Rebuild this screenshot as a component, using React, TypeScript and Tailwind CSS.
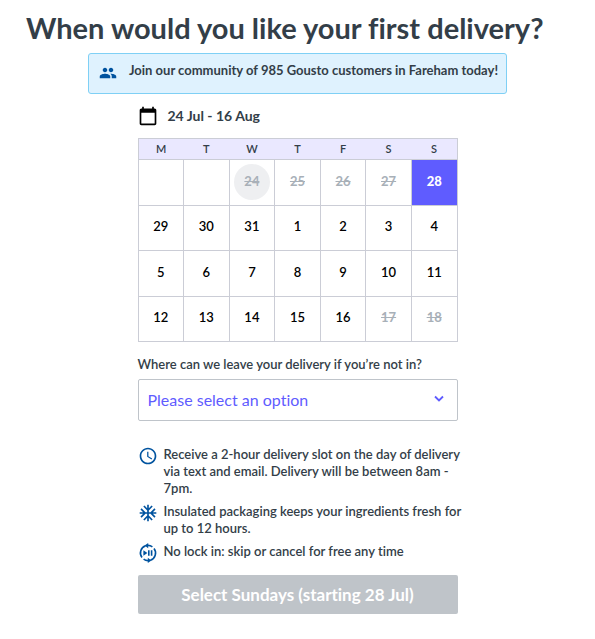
import { useState } from 'react';
import { MdAccessTime, MdAcUnit, MdCalendarToday, MdPeople } from 'react-icons/md';

type Day = { label: string; disabled?: boolean; today?: boolean };

const weekDays = ['M', 'T', 'W', 'T', 'F', 'S', 'S'];

const open = (...days: number[]): Day[] => days.map((d) => ({ label: String(d) }));

const weeks: Day[][] = [
  [
    { label: '' },
    { label: '' },
    { label: '24', disabled: true, today: true },
    { label: '25', disabled: true },
    { label: '26', disabled: true },
    { label: '27', disabled: true },
    { label: '28' },
  ],
  open(29, 30, 31, 1, 2, 3, 4),
  open(5, 6, 7, 8, 9, 10, 11),
  [...open(12, 13, 14, 15, 16), { label: '17', disabled: true }, { label: '18', disabled: true }],
];

// Play/pause glyph inside two circling arrows
function PauseCycleIcon() {
  return (
    <svg width="20" height="20" viewBox="0 0 20 20" fill="none" stroke="currentColor" strokeWidth="1.6" aria-hidden="true">
      <path d="M4 14.6A7.6 7.6 0 0 1 7.6 2.8M12.4 17.2A7.6 7.6 0 0 0 16 5.4M10 2.4a7.6 7.6 0 0 1 4.4 1.4M10 17.6a7.6 7.6 0 0 1-4.4-1.4" />
      <path d="M10.2 0v5.2L6.6 2.6zM9.8 14.8V20l3.6-2.6z" fill="currentColor" stroke="none" />
      <path d="M5.4 7.2 9.4 10l-4 2.8z" fill="currentColor" stroke="none" />
      <path d="M10.8 7.2v5.6M13.6 7.2v5.6" />
    </svg>
  );
}

function DayCell({ day, selected, onSelect }: { day: Day; selected: boolean; onSelect: () => void }) {
  if (!day.label) return <td className="border border-[#cbcdd6]" />;

  let style = 'font-semibold text-black';
  if (day.disabled) style = 'font-bold text-[#a8b0b8] line-through';
  if (selected) style = 'font-black text-white';

  return (
    <td className={`border border-[#cbcdd6] p-0 ${selected ? 'bg-[#5f5cff]' : ''}`}>
      <button
        type="button"
        disabled={day.disabled}
        aria-pressed={selected}
        onClick={onSelect}
        className={`mx-auto flex size-9 items-center justify-center rounded-full pb-0.5 text-[13px] ${day.today ? 'bg-[#eeeff1]' : ''} ${style}`}
      >
        {day.label}
      </button>
    </td>
  );
}

export default function App() {
  const [selected, setSelected] = useState('28');
  const [place, setPlace] = useState('');

  return (
    <main className="min-h-screen bg-white px-[26px] pt-2.5 pb-6 font-['Lato','Liberation_Sans',sans-serif] text-[#333e48] [font-variant-ligatures:none]">
      <h1 className="text-[29px] leading-9 font-bold">When would you like your first delivery?</h1>

      <div className="mx-auto mt-[7px] flex h-[41px] w-fit items-start gap-3 rounded-[3px] border border-[#7fd0f5] bg-[#dff2fe] pt-2 pr-2 pl-2.5">
        <MdPeople size={18} className="mt-0.5 text-[#00539f]" />
        <p className="text-[13px] leading-4 font-bold">Join our community of 985 Gousto customers in Fareham today!</p>
      </div>

      <div className="mx-auto mt-3 max-w-80">
        <div className="flex items-center gap-2.5">
          <MdCalendarToday size={20} className="text-black" />
          <p className="text-sm leading-5 font-bold">24 Jul - 16 Aug</p>
        </div>

        <table className="mt-3 h-[204px] w-full table-fixed border-collapse text-center">
          <thead>
            <tr className="h-[21px] bg-[#eae8ff]">
              {weekDays.map((d, i) => (
                <th key={i} scope="col" className="border-y border-[#cbcdd6] p-0 text-[11px] leading-4 font-semibold first:border-l last:border-r">
                  {d}
                </th>
              ))}
            </tr>
          </thead>
          <tbody>
            {weeks.map((week, i) => (
              <tr key={i}>
                {week.map((day, j) => (
                  <DayCell key={j} day={day} selected={day.label === selected} onSelect={() => setSelected(day.label)} />
                ))}
              </tr>
            ))}
          </tbody>
        </table>

        <label htmlFor="place" className="mt-3.5 block text-[13px] leading-4 font-semibold">
          Where can we leave your delivery if you’re not in?
        </label>
        <div className="relative mt-[7px]">
          <select
            id="place"
            value={place}
            onChange={(e) => setPlace(e.target.value)}
            className="block h-[42px] w-full appearance-none rounded-[2px] border border-[#bfc4ca] bg-white px-[9px] text-base text-[#5f5cff]"
          >
            <option value="">Please select an option</option>
          </select>
          <svg className="pointer-events-none absolute top-4 right-3.5" width="10" height="8" viewBox="0 0 10 8" fill="none" stroke="#5f5cff" strokeWidth="1.8" aria-hidden="true">
            <path d="M1 1.5 5 5.5 9 1.5" />
          </svg>
        </div>

        <ul className="-mr-2 mt-[25px] space-y-1.5 text-[13px] leading-[17px] font-semibold">
          <li className="flex gap-1.5">
            <MdAccessTime size={20} className="shrink-0 text-[#00539f]" />
            <span>Receive a 2-hour delivery slot on the day of delivery via text and email. Delivery will be between 8am - 7pm.</span>
          </li>
          <li className="flex gap-1.5">
            <MdAcUnit size={20} className="shrink-0 text-[#00539f]" />
            <span>Insulated packaging keeps your ingredients fresh for up to 12 hours.</span>
          </li>
          <li className="flex gap-1.5">
            <span className="shrink-0 text-[#00539f]">
              <PauseCycleIcon />
            </span>
            <span>No lock in: skip or cancel for free any time</span>
          </li>
        </ul>

        <button type="button" disabled className="mt-3 h-[39px] w-full rounded-[2px] bg-[#bfc4c9] text-[17px] font-bold text-white">
          Select Sundays (starting 28 Jul)
        </button>
      </div>
    </main>
  );
}
